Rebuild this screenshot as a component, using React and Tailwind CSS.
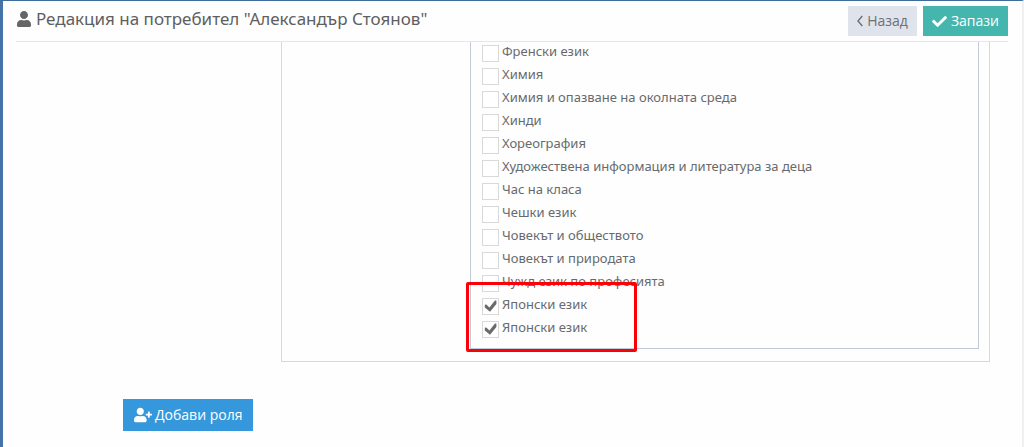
import { FaCheck, FaUser, FaUserPlus } from 'react-icons/fa'

const SUBJECTS = [
  { id: 1, name: 'Френски език' },
  { id: 2, name: 'Химия' },
  { id: 3, name: 'Химия и опазване на околната среда' },
  { id: 4, name: 'Хинди' },
  { id: 5, name: 'Хореография' },
  { id: 6, name: 'Художествена информация и литература за деца' },
  { id: 7, name: 'Час на класа' },
  { id: 8, name: 'Чешки език' },
  { id: 9, name: 'Човекът и обществото' },
  { id: 10, name: 'Човекът и природата' },
  { id: 11, name: 'Чужд език по професията' },
  { id: 12, name: 'Японски език', checked: true },
  { id: 13, name: 'Японски език', checked: true },
]

function SubjectRow({ subject }) {
  return (
    <label className="flex h-[23px] items-start gap-[3px]">
      <span className="mt-[3px] grid h-[17px] w-[17px] shrink-0">
        <input
          type="checkbox"
          defaultChecked={subject.checked}
          className="peer col-start-1 row-start-1 h-[17px] w-[17px] appearance-none border border-[#d9d9d9] bg-white"
        />
        <svg
          viewBox="0 0 17 17"
          className="pointer-events-none invisible col-start-1 row-start-1 h-[17px] w-[17px] peer-checked:visible"
          aria-hidden
        >
          <path d="M2.8 6.8 4.4 6.6 7.4 9.4 13 2.6 14.4 2.6V6L8 13.8 2.8 9.6Z" fill="#6a6a6a" />
        </svg>
      </span>
      <span className="leading-[19px]">{subject.name}</span>
    </label>
  )
}

export default function App() {
  return (
    <div className="min-h-screen border-t border-r-2 border-l-3 border-t-[#3f6d9b] border-r-[#f0f0f0] border-l-[#4373a8] bg-[#fefefe] pr-3.5 pl-[13px] font-['Noto_Sans','Open_Sans',sans-serif] text-[13px] text-[#676a6c]">
      <header className="flex h-[41px] items-start justify-between border-b border-[#e7e7e7] pt-[5px]">
        <h1 className="flex items-center gap-1 text-[17px] leading-[26px] text-[#5e5f61]">
          <FaUser className="h-4 w-4 text-[#666]" />
          Редакция на потребител "Александър Стоянов"
        </h1>
        <div className="flex gap-1.5 font-['Open_Sans','Noto_Sans',sans-serif] text-sm">
          <button type="button" className="flex h-[30px] items-center gap-1 bg-[#dfe3eb] px-[9px] text-[#6d7076]">
            <svg viewBox="0 0 6 12" className="h-3 w-1.5" fill="none" stroke="currentColor" strokeWidth="1.4" aria-hidden>
              <path d="M5.3 1 1 6 5.3 11" />
            </svg>
            Назад
          </button>
          <button type="button" className="flex h-[30px] items-center gap-1 bg-[#44b6ae] px-[9px] text-white">
            <FaCheck className="h-[15px] w-[15px]" />
            Запази
          </button>
        </div>
      </header>

      <main>
        <section className="mr-[18px] ml-[265px] border-r border-b border-l border-[#d8d8d8] pr-[10px] pb-3 pl-[188px]">
          <fieldset
            aria-label="Предмети"
            className="relative border-r border-b border-l border-[#c2cad8] pb-[7px] pl-[11px]"
          >
            {SUBJECTS.map((subject) => (
              <SubjectRow key={subject.id} subject={subject} />
            ))}
            <div className="pointer-events-none absolute -bottom-1 -left-[5px] h-[70px] w-[171px] rounded-xs border-3 border-[#fb0007]" />
          </fieldset>
        </section>

        <button
          type="button"
          className="mt-[37px] ml-[107px] flex h-8 items-center gap-[3px] bg-[#3598dc] px-[11px] font-['Open_Sans','Noto_Sans',sans-serif] text-sm text-white"
        >
          <FaUserPlus className="h-[18px] w-[18px]" />
          Добави роля
        </button>
      </main>
    </div>
  )
}
